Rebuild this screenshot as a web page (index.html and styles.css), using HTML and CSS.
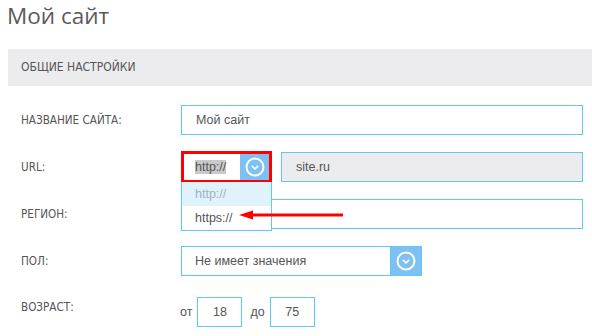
FILE: index.html
```html
<!DOCTYPE html>
<html lang="ru">

<head>
    <meta charset="UTF-8">
    <meta name="viewport" content="width=device-width, initial-scale=1.0">
    <title>Мой сайт</title>
    <link rel="stylesheet" href="styles.css">
</head>

<body>
    <h1 class="page-title">Мой сайт</h1>

    <div class="section-head">ОБЩИЕ НАСТРОЙКИ</div>

    <div class="settings">
        <div class="row">
            <div class="label">НАЗВАНИЕ САЙТА:</div>
            <div class="field field-wide">Мой сайт</div>
        </div>

        <div class="row">
            <div class="label">URL:</div>
            <div class="proto">
                <div class="proto-box">
                    <div class="proto-value"><span class="selected">http://</span></div>
                    <div class="drop-btn">
                        <svg width="20" height="20" viewBox="0 0 20 20">
                            <circle cx="10" cy="10" r="8.5" fill="none" stroke="#fff" stroke-width="2" />
                            <path d="M6.8 8.8 L10 11.8 L13.2 8.8" fill="none" stroke="#fff" stroke-width="1.6" />
                        </svg>
                    </div>
                </div>
                <ul class="proto-list">
                    <li class="active">http://</li>
                    <li>https://</li>
                </ul>
                <svg class="pointer" width="110" height="12" viewBox="0 0 110 12">
                    <path d="M10 6 L104 6" stroke="#f00" stroke-width="3" />
                    <path d="M0 6 L14 1.5 L14 10.5 Z" fill="#f00" />
                </svg>
            </div>
            <div class="field field-domain">site.ru</div>
        </div>

        <div class="row">
            <div class="label">РЕГИОН:</div>
            <div class="field field-wide"></div>
        </div>

        <div class="row">
            <div class="label">ПОЛ:</div>
            <div class="select">
                <div class="select-value">Не имеет значения</div>
                <div class="drop-btn">
                    <svg width="20" height="20" viewBox="0 0 20 20">
                        <circle cx="10" cy="10" r="8.5" fill="none" stroke="#fff" stroke-width="2" />
                        <path d="M6.8 8.8 L10 11.8 L13.2 8.8" fill="none" stroke="#fff" stroke-width="1.6" />
                    </svg>
                </div>
            </div>
        </div>

        <div class="row row-age">
            <div class="label">ВОЗРАСТ:</div>
            <span class="age-word">от</span>
            <div class="field field-age">18</div>
            <span class="age-word">до</span>
            <div class="field field-age">75</div>
        </div>
    </div>
</body>

</html>
```

FILE: styles.css
```css
body {
    margin: 0;
    font-family: "Liberation Sans", Arial, sans-serif;
    color: #555;
    background: #fff;
}

.page-title {
    margin: 0;
    padding: 0 0 0 7px;
    font-family: "Open Sans", sans-serif;
    font-weight: normal;
    font-size: 22.5px;
    line-height: 31px;
    color: #5a5a5a;
}

.section-head {
    margin: 18px 0 0 8px;
    height: 37px;
    line-height: 37px;
    padding-left: 13px;
    background: #ececee;
    font-family: "DejaVu Sans Condensed", "DejaVu Sans", sans-serif;
    font-size: 12px;
    color: #555;
}

.settings {
    padding-left: 21px;
}

.row {
    display: flex;
    align-items: center;
    margin-top: 17px;
    height: 30px;
}

.row:first-child {
    margin-top: 19px;
}

.label {
    width: 160px;
    flex-shrink: 0;
    font-family: "DejaVu Sans Condensed", "DejaVu Sans", sans-serif;
    font-size: 11.6px;
    color: #555;
}

.field {
    box-sizing: border-box;
    height: 30px;
    border: 1px solid #5ccaf5;
    padding-left: 14px;
    line-height: 28px;
    font-size: 12.5px;
    color: #555;
}

.field-wide {
    width: 402px;
}

.field-domain {
    width: 302px;
    margin-left: 9px;
    background: #ececee;
}

.proto {
    position: relative;
    width: 91px;
}

.proto-box {
    display: flex;
    box-sizing: border-box;
    height: 32px;
    border: 3px solid #f00;
    background: #fff;
}

.proto-value {
    flex: 1;
    padding-left: 11px;
    line-height: 26px;
    font-size: 12.5px;
}

.selected {
    background: #c9c9c9;
    color: #555;
}

.drop-btn {
    width: 30px;
    display: flex;
    align-items: center;
    justify-content: center;
    background: #7ec0f2;
}

.proto .drop-btn {
    width: 29px;
}

.proto-list {
    position: absolute;
    left: 0;
    top: 31px;
    z-index: 2;
    box-sizing: border-box;
    width: 91px;
    margin: 0;
    padding: 0;
    list-style: none;
    border: 1px solid #5ccaf5;
    border-top: none;
    background: #fff;
}

.proto-list li {
    height: 24px;
    line-height: 24px;
    padding-left: 13px;
    font-size: 12.5px;
    color: #555;
}

.proto-list li.active {
    background: #e0f2fb;
    color: #9bb3cc;
}

.pointer {
    position: absolute;
    left: 58px;
    top: 58px;
    z-index: 3;
}

.select {
    display: flex;
    box-sizing: border-box;
    width: 241px;
    height: 30px;
    border: 1px solid #5ccaf5;
}

.select-value {
    flex: 1;
    padding-left: 13px;
    line-height: 28px;
    font-size: 12.5px;
}

.select .drop-btn {
    border-left: 1px solid #5ccaf5;
}

.row-age {
    margin-top: 21px;
}

.row-age .label {
    margin-top: -10px;
}

.age-word {
    font-size: 12.5px;
    margin-right: 5px;
    margin-left: -1px;
}

.field-age {
    width: 45px;
    padding-left: 0;
    text-align: center;
    margin-right: 9px;
}
```
